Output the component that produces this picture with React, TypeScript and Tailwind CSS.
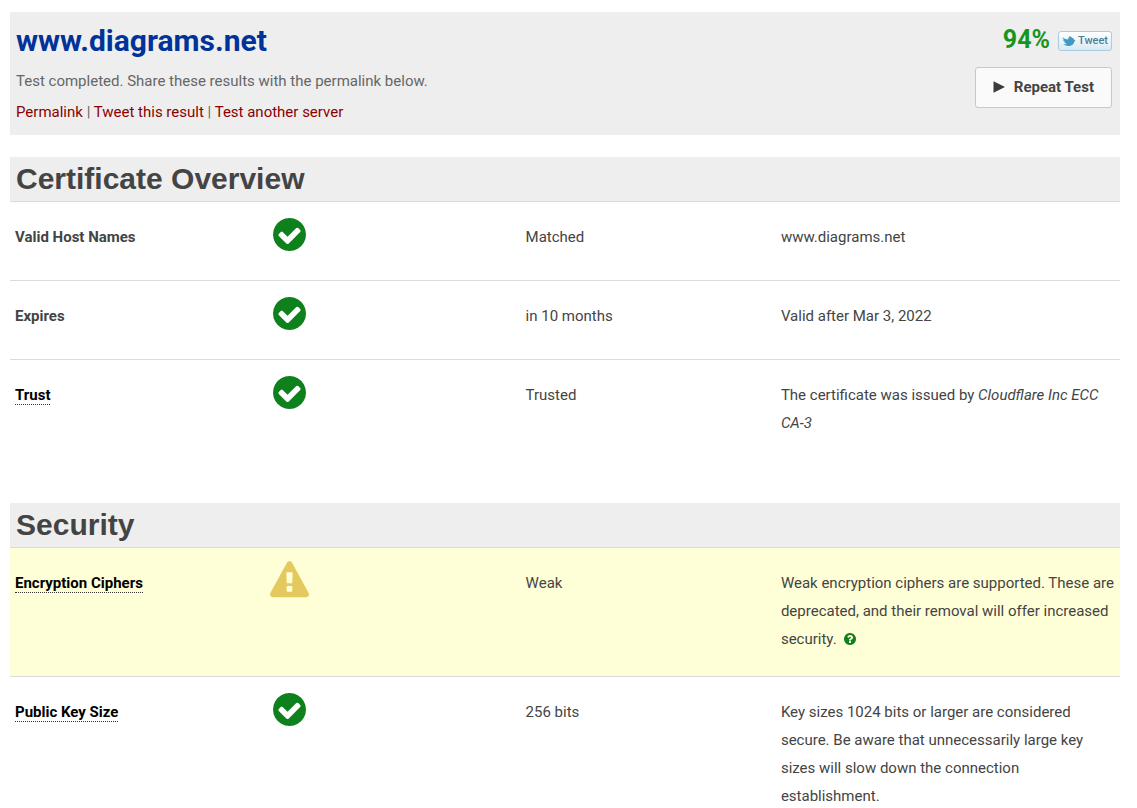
import type { ReactNode } from "react";

function CheckIcon() {
  return (
    <svg viewBox="128 128 1536 1536" className="size-[33px] fill-[#0e801c]" role="img" aria-label="Pass">
      <path d="M1412 734q0-28-18-46l-91-90q-19-19-45-19t-45 19l-408 407-226-226q-19-19-45-19t-45 19l-91 90q-18 18-18 46 0 27 18 45l362 362q19 19 45 19 27 0 46-19l543-543q18-18 18-45zm252 162q0 209-103 385.5t-279.5 279.5-385.5 103-385.5-103-279.5-279.5-103-385.5 103-385.5 279.5-279.5 385.5-103 385.5 103 279.5 279.5 103 385.5z" />
    </svg>
  );
}

function WarningIcon() {
  return (
    <svg viewBox="0 0 1792 1792" className="size-[39px] fill-[#e4c95f]" role="img" aria-label="Warning">
      <path d="M1024 1375v-190q0-14-9.5-23.5t-22.5-9.5h-192q-13 0-22.5 9.5t-9.5 23.5v190q0 14 9.5 23.5t22.5 9.5h192q13 0 22.5-9.5t9.5-23.5zm-2-374l18-459q0-12-10-19-13-11-24-11h-220q-11 0-24 11-10 7-10 21l17 457q0 10 10 16.5t24 6.5h185q14 0 23.5-6.5t10.5-16.5zm-14-934l768 1408q35 63-2 126-17 29-46.5 46t-63.5 17h-1536q-34 0-63.5-17t-46.5-46q-37-63-2-126l768-1408q17-31 47-49t65-18 65 18 47 49z" />
    </svg>
  );
}

function HelpIcon() {
  return (
    <svg viewBox="128 128 1536 1536" className="inline-block size-3 fill-[#0e801c] align-[-1px]" aria-hidden="true">
      <path d="M1024 1376v-192q0-14-9-23t-23-9h-192q-14 0-23 9t-9 23v192q0 14 9 23t23 9h192q14 0 23-9t9-23zm256-672q0-88-55.5-163t-138.5-116-170-41q-243 0-371 213-15 24 8 42l132 100q7 6 19 6 16 0 25-12 53-68 86-92 34-24 86-24 48 0 85.5 26t37.5 59q0 38-20 61t-68 45q-63 28-115.5 86.5t-52.5 125.5v36q0 14 9 23t23 9h192q14 0 23-9t9-23q0-19 21.5-49.5t54.5-49.5q32-18 49-28.5t46-35 44.5-48 28-60.5 12.5-81zm384 192q0 209-103 385.5t-279.5 279.5-385.5 103-385.5-103-279.5-279.5-103-385.5 103-385.5 279.5-279.5 385.5-103 385.5 103 279.5 279.5 103 385.5z" />
    </svg>
  );
}

function BirdIcon() {
  return (
    <svg viewBox="0 0 14 11" className="h-[11px] w-3.5 fill-[#3f9ac4]" aria-hidden="true">
      <path d="M0.3 1.2C2.1 2.6 3.8 3.2 5.8 3.6C6.1 2.6 6.9 1.6 7.3 0.2C8.9 0.5 9.8 1.1 10.3 2C11.5 2.4 12 3 12.3 3.9L13.8 5L12.2 5.4C12 8.2 9.6 9.9 6.4 9.9C4.1 9.9 2.3 9.2 1.4 8.1C2.7 8.4 4 8.3 4.8 7.7C3.4 7.5 2.5 6.9 2.2 6.1L3.4 5.9C1.9 5.3 1.2 4.6 1 3.8L2.2 3.9C1.1 3.1 0.5 2.2 0.3 1.2Z" />
    </svg>
  );
}

type Row = {
  name: string;
  hint?: boolean;
  warning?: boolean;
  value: string;
  detail: ReactNode;
};

const overview: Row[] = [
  { name: "Valid Host Names", value: "Matched", detail: "www.diagrams.net" },
  { name: "Expires", value: "in 10 months", detail: "Valid after Mar 3, 2022" },
  {
    name: "Trust",
    hint: true,
    value: "Trusted",
    detail: (
      <>
        The certificate was issued by <em>Cloudflare Inc ECC CA-3</em>
      </>
    ),
  },
];

const security: Row[] = [
  {
    name: "Encryption Ciphers",
    hint: true,
    warning: true,
    value: "Weak",
    detail: (
      <>
        Weak encryption ciphers are supported. These are deprecated, and their removal will offer increased
        security.{" "}
        <a href="#ciphers" aria-label="More about encryption ciphers" className="ml-1">
          <HelpIcon />
        </a>
      </>
    ),
  },
  {
    name: "Public Key Size",
    hint: true,
    value: "256 bits",
    detail:
      "Key sizes 1024 bits or larger are considered secure. Be aware that unnecessarily large key sizes will slow down the connection establishment.",
  },
];

function ResultTable({ title, rows }: { title: string; rows: Row[] }) {
  return (
    <table className="w-full table-fixed border-separate border-spacing-0 text-left">
      <colgroup>
        <col className="w-[23%]" />
        <col className="w-[23%]" />
        <col className="w-[23%]" />
        <col className="w-[31%]" />
      </colgroup>
      <thead>
        <tr>
          <th
            colSpan={4}
            className="border-b border-[#dbdbdb] bg-[#eee] px-[6px] py-1 font-['Liberation_Sans',Arial,sans-serif] text-[30px] leading-9 font-bold"
          >
            {title}
          </th>
        </tr>
      </thead>
      <tbody className="[&>tr:last-child>*]:border-b-0">
        {rows.map((row) => (
          <tr
            key={row.name}
            className={
              row.warning
                ? "bg-[#ffffd7] *:border-b *:border-[#dbdbdb] *:pl-[5px] *:align-top"
                : "*:border-b *:border-[#dbdbdb] *:pl-[5px] *:align-top"
            }
          >
            <th scope="row" className="py-[21px] font-bold">
              {row.hint ? (
                <abbr className="border-b border-dotted border-[#333] text-black no-underline">{row.name}</abbr>
              ) : (
                row.name
              )}
            </th>
            <td className="pt-[13px] pb-[26px]">
              <div className="flex size-[39px] items-center justify-center">
                {row.warning ? <WarningIcon /> : <CheckIcon />}
              </div>
            </td>
            <td className="py-[21px]">{row.value}</td>
            <td className="pt-[21px] pb-[23px]">{row.detail}</td>
          </tr>
        ))}
      </tbody>
    </table>
  );
}

export default function App() {
  return (
    <main className="bg-white pt-3 pr-[17px] pl-2.5 font-[Roboto,sans-serif] text-[15px] leading-7 text-[#444]">
      <header className="mb-[22px] flex justify-between bg-[#eee] px-[6px] pt-2.5 pb-[9px]">
        <div>
          <h1 className="text-[30px] leading-[38px] font-bold text-[#003399]">www.diagrams.net</h1>
          <p className="mt-[7px] text-[#666]">Test completed. Share these results with the permalink below.</p>
          <nav className="mt-[3px] text-[#666]">
            <a href="#permalink" className="text-[#8b0000]">Permalink</a> |{" "}
            <a href="#tweet" className="text-[#8b0000]">Tweet this result</a> |{" "}
            <a href="#test" className="text-[#8b0000]">Test another server</a>
          </nav>
        </div>
        <div className="flex flex-col items-end pr-0.5">
          <div className="flex items-center gap-2">
            <strong className="text-[25px] leading-9 font-bold text-[#16951f]">94%</strong>
            <button
              type="button"
              className="mt-0.5 flex h-5 items-center gap-0.5 rounded-[3px] border border-[#a9cce0] bg-linear-to-b from-white to-[#d9e9f2] px-[3px] text-[11px] leading-4 font-medium text-[#4a7f99]"
            >
              <BirdIcon />
              Tweet
            </button>
          </div>
          <button
            type="button"
            className="mt-[9px] flex h-[41px] items-center gap-[9px] rounded-[3px] border border-[#c8c8c8] bg-[#fafafa] px-[17px] pb-0.5 font-bold"
          >
            <svg viewBox="0 0 12 12" className="size-3 fill-[#3b3b3b]" aria-hidden="true">
              <path d="M0.5 0.3L12 6L0.5 11.7Z" />
            </svg>
            Repeat Test
          </button>
        </div>
      </header>
      <ResultTable title="Certificate Overview" rows={overview} />
      <div className="mt-[43px]">
        <ResultTable title="Security" rows={security} />
      </div>
    </main>
  );
}
